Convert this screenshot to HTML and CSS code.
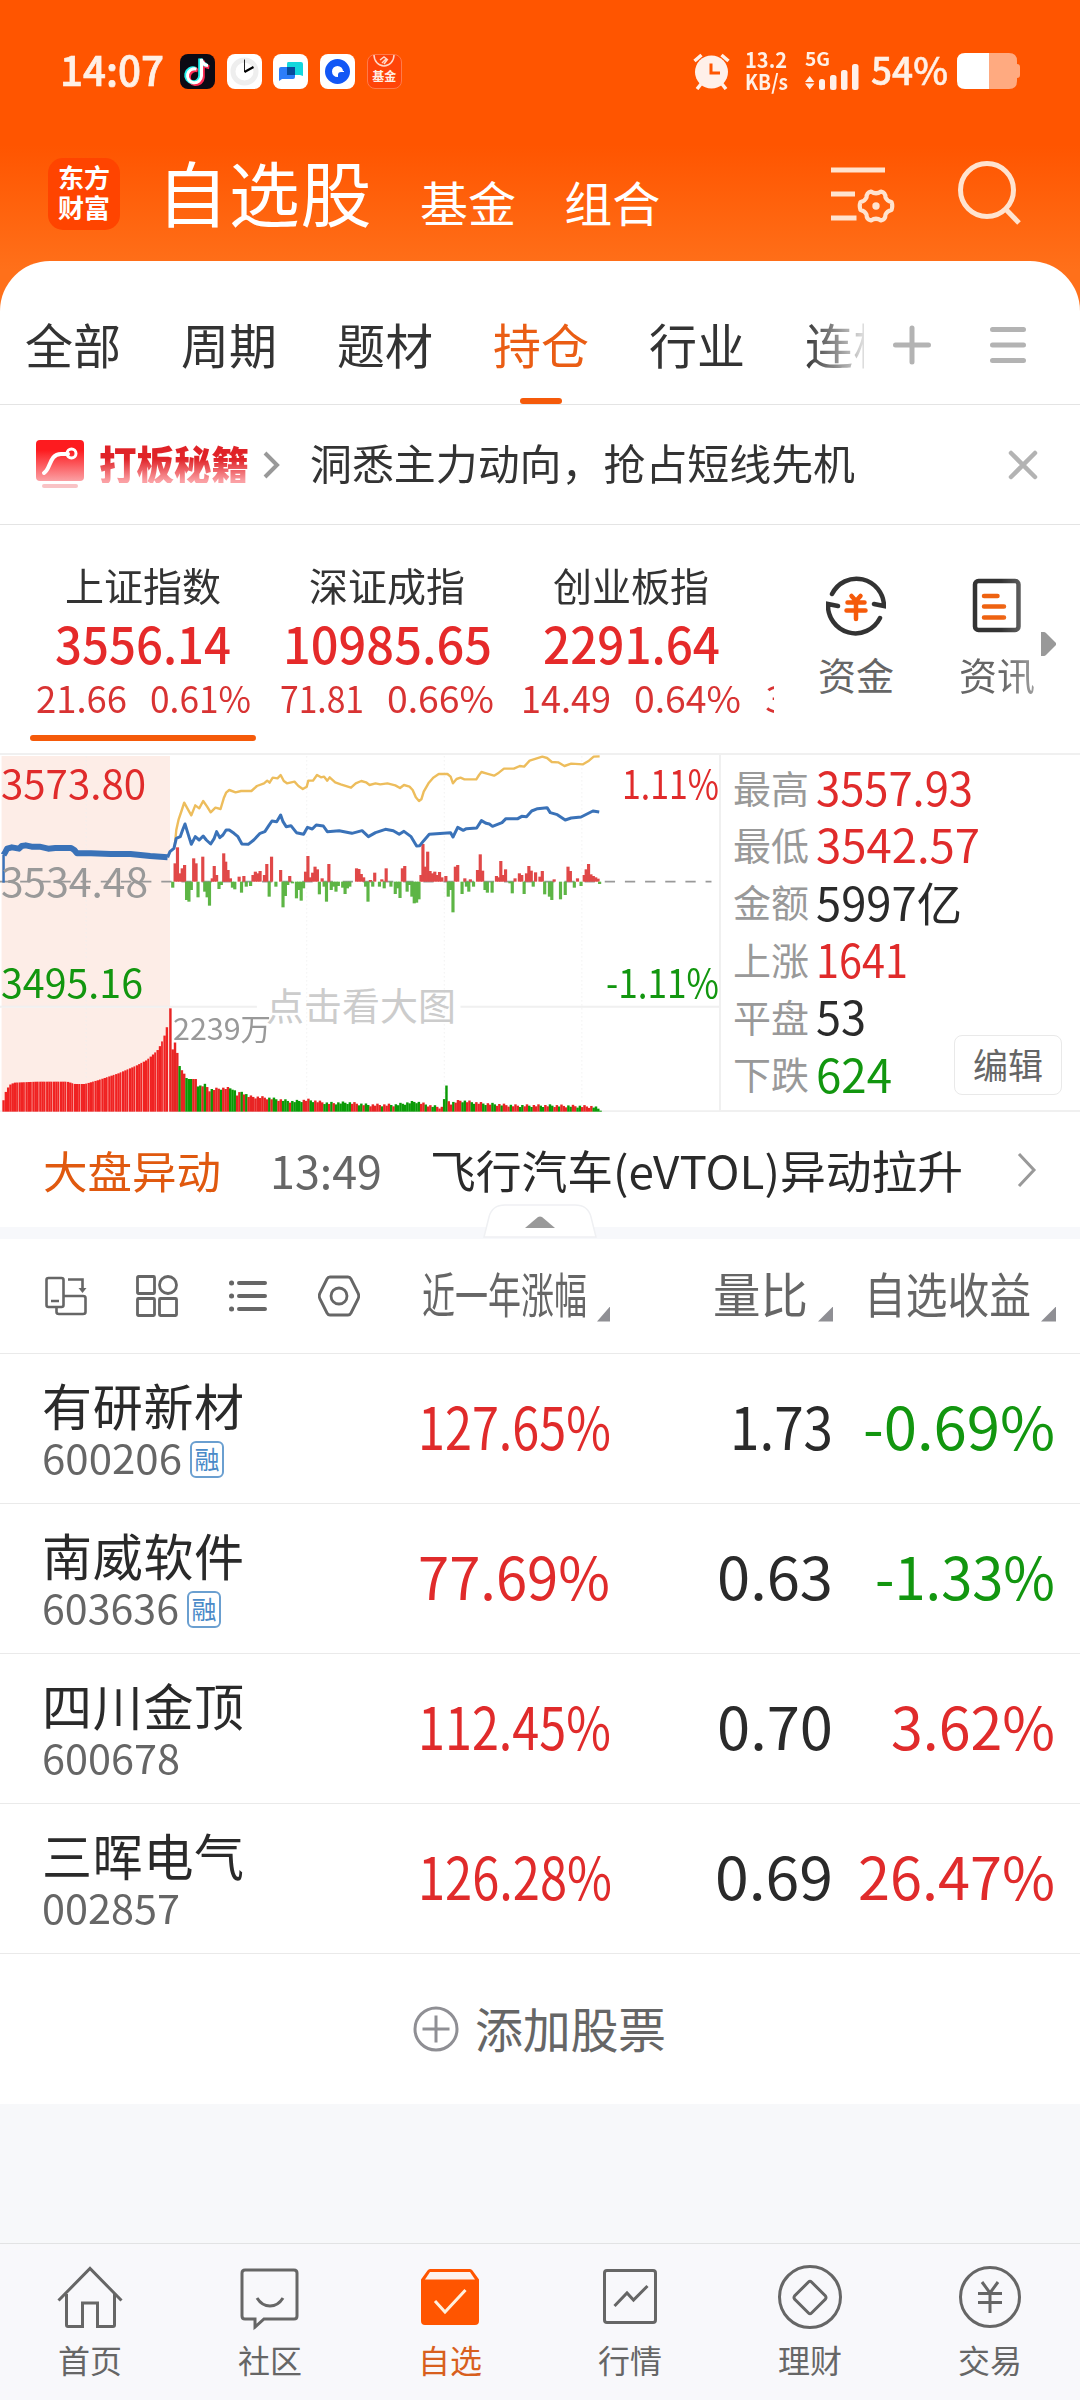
FILE: index.html
```html
<!DOCTYPE html>
<html lang="zh-CN">
<head>
  <meta charset="UTF-8" />
  <meta name="viewport" content="width=device-width, initial-scale=1.0"/>
  <title>自选股</title>
  <link rel="stylesheet" href="styles.css">
</head>
<body>
  <header class="top">
    <div class="status">
      <span class="clock" data-w="104">14:07</span>
      <div class="apps">
        <svg width="35" height="35" viewBox="0 0 35 35"><rect width="35" height="35" rx="8" fill="#0c0a14"/><g fill="none" stroke-width="4"><path d="M17 15.500a7 7 0 1 0 5 7V6c.5 4 3 6 6.500 6.500" stroke="#fe2c55" transform="translate(.8 .8)"/><path d="M16 15a7 7 0 1 0 5 7V5c.5 4 3 6 6.500 6.500" stroke="#25f4ee" transform="translate(-.8 -.4)"/><path d="M16.500 15a7 7 0 1 0 5 7V5c.5 4 3 6 6.500 6.500" stroke="#fff" stroke-width="3"/></g></svg>
        <svg width="35" height="35" viewBox="0 0 35 35"><rect width="35" height="35" rx="8" fill="#fff"/><circle cx="17.500" cy="17.500" r="11.500" fill="none" stroke="#eee" stroke-width="5"/><path d="M17.500 18V5.500" stroke="#222"/><path d="m17.500 18 9-5" stroke="#000" stroke-width="2.200"/></svg>
        <svg width="35" height="35" viewBox="0 0 35 35"><rect width="35" height="35" rx="8" fill="#fff"/><path d="M15 8h13q2 0 2 2v12l-3-1H14V10q0-2 1-2z" fill="#12d7dd"/><path d="M8 13h14v10q0 2-2 2H9l-3 2V15q0-2 2-2z" fill="#2b7dfa"/><path d="M14 13h8v8h-8z" fill="#064a9c"/></svg>
        <svg width="35" height="35" viewBox="0 0 35 35"><rect width="35" height="35" rx="8" fill="#fff"/><circle cx="17.500" cy="17.500" r="9" fill="none" stroke="#1257f5" stroke-width="7"/><path d="M18 17h6v6h-6z" fill="#fff"/><path d="M18 23v-2q0-3 3-3h4v5z" fill="#1257f5"/></svg>
        <div class="fund-app">
          <svg width="22" height="13" viewBox="0 0 22 13"><path d="M1 0a10 11 0 0 0 20 0M7 5l4-3 4 3M9 8l4-4M11 9l3-4" fill="none" stroke="#ffd8c8" stroke-width="1.500"/></svg>
          <span>基金</span>
        </div>
      </div>
      <div class="status-right">
        <svg class="alarm" width="37" height="37" viewBox="0 0 37 37"><circle cx="18.500" cy="19" r="16.500" fill="#fff0e9"/><path d="m1.500 8 7-6M35.500 8l-7-6M8 31l-4 5M29 31l4 5" stroke="#fff0e9" stroke-width="3.500"/><path d="M18 10.500V20h9" fill="none" stroke="#ff5500" stroke-width="3"/></svg>
        <div class="speed"><span data-w="42">13.2</span><span data-w="43">KB/s</span></div>
        <div class="signal">
          <span data-w="25">5G</span>
          <svg width="54" height="26" viewBox="0 0 54 26"><g fill="#fff0e9"><path d="m0 18 4.700-6 4.700 6zM0 19.500l4.700 6 4.700-6z"/><rect x="14" y="15" width="6" height="11" rx="2.500"/><rect x="25" y="11" width="6.500" height="15" rx="2.500"/><rect x="36" y="6" width="6.500" height="20" rx="2.500"/><rect x="47" y="0" width="6.500" height="26" rx="2.500"/></g></svg>
        </div>
        <span class="percent" data-w="77">54%</span>
        <svg class="battery" width="63" height="36" viewBox="0 0 63 36"><path d="M32 0h20q8 0 8 8v3q3 0 3 3v8q0 3-3 3v3q0 8-8 8H32z" fill="#ffaa80"/><path d="M8 0h24v36H8q-8 0-8-8V8q0-8 8-8z" fill="#fff"/></svg>
      </div>
    </div>
    <nav class="main-nav">
      <div class="logo"><span>东方</span><span>财富</span></div>
      <span class="nav-active">自选股</span>
      <span class="nav-link">基金</span>
      <span class="nav-link">组合</span>
      <svg class="filter" width="64" height="60" viewBox="0 0 64 60" fill="none" stroke="#ffe3cf" stroke-width="5"><path d="M0 6h54M0 30h24M0 54h25.500"/><path d="M40 27.500q5 3.500 10 0 4.500 1 4.500 6 1.500 3.500 6 4.500 1.500 4 0 8-4.500 1-6 4.500 0 5-4.500 6-5-3.500-10 0-4.500-1-4.500-6-1.500-3.500-6-4.500-1.500-4 0-8 4.500-1 6-4.500 0-5 4.500-6z" stroke-width="4.200" stroke-linejoin="round"/><circle cx="45" cy="42" r="3.700" fill="#ffe3cf" stroke="none"/></svg>
      <svg class="search" width="64" height="66" viewBox="0 0 64 66" fill="none" stroke="#ffe3cf" stroke-width="5"><circle cx="29" cy="29" r="26.500"/><path d="m47.500 48 13.500 14"/></svg>
    </nav>
  </header>

  <main>
    <div class="groups">
      <div class="group-list">
        <span>全部</span><span>周期</span><span>题材</span><span class="on">持仓</span><span>行业</span><span>连板</span>
      </div>
      <svg width="40" height="40" viewBox="0 0 40 40" stroke="#b3b3b3" stroke-width="5" stroke-linecap="round"><path d="M20 3v34M3.500 20h33"/></svg>
      <svg class="menu" width="40" height="40" viewBox="0 0 40 40" stroke="#b3b3b3" stroke-width="5" stroke-linecap="round"><path d="M4.500 4.500h31M4.500 20h31M4.500 35.500h31"/></svg>
    </div>

    <div class="banner">
      <svg width="48" height="49" viewBox="0 0 48 49"><defs><linearGradient id="red" x2="0" y2="1"><stop offset=".25" stop-color="#fd1b1f"/><stop offset="1" stop-color="#fba0a4"/></linearGradient></defs><rect width="48" height="41" rx="4" fill="url(#red)"/><rect x="6" y="44" width="36" height="4" rx="2" fill="#f9c3c5"/><path d="M8 33C15 29 13 14 25 14h7" fill="none" stroke="#fff" stroke-width="4" stroke-linecap="round"/><circle cx="35.500" cy="13.500" r="4.500" fill="none" stroke="#fff" stroke-width="3"/></svg>
      <b data-w="150">打板秘籍</b>
      <svg class="go" width="17" height="28" viewBox="0 0 17 28" fill="none" stroke="#999" stroke-width="4"><path d="m2 2 12 12L2 26"/></svg>
      <span class="slogan" data-w="545">洞悉主力动向，抢占短线先机</span>
      <svg class="close" width="30" height="30" viewBox="0 0 30 30" stroke="#b3b3b3" stroke-width="4.500" stroke-linecap="round"><path d="m3 3 24 24M27 3 3 27"/></svg>
    </div>

    <div class="indices">
      <div class="index-list">
        <div class="index on"><span data-w="156">上证指数</span><strong data-w="176">3556.14</strong><p><span data-w="91">21.66</span><span data-w="101">0.61%</span></p></div>
        <div class="index"><span data-w="156">深证成指</span><strong data-w="209">10985.65</strong><p><span data-w="84">71.81</span><span data-w="107">0.66%</span></p></div>
        <div class="index"><span data-w="156">创业板指</span><strong data-w="177">2291.64</strong><p><span data-w="90">14.49</span><span data-w="107">0.64%</span></p></div>
        <div class="index cut"><p><span data-w="84">3.42</span></p></div>
      </div>
      <div class="shortcut">
        <svg width="60" height="62" viewBox="0 0 60 62" fill="none" stroke="#333" stroke-width="4.500" stroke-linecap="round"><path d="M6 19a27.500 28 0 0 1 52 12l-10-2M54 43A27.500 28 0 0 1 2 29l10 2"/><path d="m25.500 21 4.500 5 4.500-5M30 26v18M21.500 27.500h17M20.500 35.500h19" stroke="#f55a0a"/></svg>
        <span>资金</span>
      </div>
      <div class="shortcut faded">
        <svg width="60" height="62" viewBox="0 0 60 62" fill="none" stroke="#333" stroke-width="4.500" stroke-linecap="round"><rect x="8" y="6" width="43.500" height="49" rx="3.500"/><path d="M17 21h13.500M17 31.500h20M17 42.500h20" stroke="#ee6210"/></svg>
        <span>资讯</span>
      </div>
      <svg class="more" width="15" height="24" viewBox="0 0 15 24"><path d="M0 0h3q1 0 2 1l10 10v2L5 23q-1 1-2 1H0z" fill="#999"/></svg>
    </div>

    <section class="market">
      <div class="chart">
        <svg id="chart" width="719" height="359" viewBox="0 39 1819 1077" preserveAspectRatio="none"></svg>
        <span class="high red" data-w="145">3573.80</span>
        <span class="mid" data-w="147">3534.48</span>
        <span class="low green" data-w="142">3495.16</span>
        <span class="high right red" data-w="97">1.11%</span>
        <span class="low right green" data-w="113">-1.11%</span>
        <span class="hint">点击看大图</span>
        <span class="volume" data-w="98">2239万</span>
      </div>
      <div class="stats">
        <dl>
          <div><dt>最高</dt><dd class="red" data-w="157">3557.93</dd></div>
          <div><dt>最低</dt><dd class="red" data-w="164">3542.57</dd></div>
          <div><dt>金额</dt><dd data-w="146">5997亿</dd></div>
          <div><dt>上涨</dt><dd class="red" data-w="92">1641</dd></div>
          <div><dt>平盘</dt><dd data-w="50">53</dd></div>
          <div><dt>下跌</dt><dd class="green" data-w="76">624</dd></div>
        </dl>
        <button class="edit">编辑</button>
      </div>
    </section>

    <div class="news">
      <span class="news-tag" data-w="178">大盘异动</span>
      <span class="news-time" data-w="112">13:49</span>
      <span class="news-title" data-w="533">飞行汽车(eVTOL)异动拉升</span>
      <svg width="20" height="34" viewBox="0 0 20 34" fill="none" stroke="#999" stroke-width="3"><path d="m2 1 15 16L2 33"/></svg>
      <svg class="handle" width="114" height="34" viewBox="0 0 114 34"><path d="M1 33 6 13Q9 1 22 1h70q13 0 16 12l5 20z" fill="#fff" stroke="#eff0f3" stroke-width="1.500"/><path d="m42 24 13-11q2-1 4 0l13 11z" fill="#999"/></svg>
    </div>

    <div class="columns">
      <div class="tools">
        <svg width="42" height="42" viewBox="0 0 42 42" fill="none" stroke="#666" stroke-width="2.600"><rect x="1.500" y="3" width="17" height="29" rx="2"/><path d="M6 26h8M19 21h19q2.500 0 2.500 2v14q0 2-2.500 2H14q-2.500 0-2.500-2v-5M23 4.500h14.500V14"/><path d="M33.500 13h8l-4 5z" fill="#666" stroke="none"/></svg>
        <svg width="42" height="42" viewBox="0 0 42 42" fill="none" stroke="#666" stroke-width="2.800"><rect x="1.500" y="1.500" width="17" height="17" rx="1"/><circle cx="32" cy="10" r="8.500"/><rect x="1.500" y="23.500" width="17" height="17" rx="1"/><rect x="23.500" y="23.500" width="17" height="17" rx="1"/></svg>
        <svg width="42" height="42" viewBox="0 0 42 42" stroke="#666" stroke-width="4" stroke-linecap="round"><path d="M12 8h26M12 21h26M12 34h26"/><path d="M4.500 8h.1M4.500 21h.1M4.500 34h.1" stroke-width="5"/></svg>
        <svg width="42" height="42" viewBox="0 0 42 42" fill="none" stroke="#666" stroke-width="2.800"><path d="M12 2h18q2 0 3 2l7 14q1.500 3 0 6l-7 14q-1 2-3 2H12q-2 0-3-2L2 24q-1.500-3 0-6L9 4q1-2 3-2z"/><circle cx="21" cy="21" r="8"/></svg>
      </div>
      <div class="col col-year"><span data-w="165">近一年涨幅</span><i></i></div>
      <div class="col col-ratio"><span data-w="95">量比</span><i></i></div>
      <div class="col col-gain"><span data-w="167">自选收益</span><i></i></div>
    </div>

    <div class="stock">
      <div class="name"><h3>有研新材</h3><p><span data-w="140">600206</span><em>融</em></p></div>
      <span class="year red" data-w="193">127.65%</span><span class="ratio" data-w="103">1.73</span><span class="gain green" data-w="192">-0.69%</span>
    </div>
    <div class="stock">
      <div class="name"><h3>南威软件</h3><p><span data-w="137">603636</span><em>融</em></p></div>
      <span class="year red" data-w="192">77.69%</span><span class="ratio" data-w="116">0.63</span><span class="gain green" data-w="180">-1.33%</span>
    </div>
    <div class="stock">
      <div class="name"><h3>四川金顶</h3><p><span data-w="138">600678</span></p></div>
      <span class="year red" data-w="193">112.45%</span><span class="ratio" data-w="116">0.70</span><span class="gain red" data-w="164">3.62%</span>
    </div>
    <div class="stock">
      <div class="name"><h3>三晖电气</h3><p><span data-w="138">002857</span></p></div>
      <span class="year red" data-w="194">126.28%</span><span class="ratio" data-w="118">0.69</span><span class="gain red" data-w="197">26.47%</span>
    </div>

    <div class="add">
      <svg width="46" height="46" viewBox="0 0 46 46" fill="none" stroke="#8f8f94" stroke-width="3"><circle cx="23" cy="23" r="21"/><path d="M23 9.500v27M9.500 23h27"/></svg>
      <span>添加股票</span>
    </div>
  </main>

  <footer class="tabbar">
    <div class="tab"><svg width="66" height="66" viewBox="0 0 66 66"><path d="m1.500 35.500 31.500-32 31.500 32M9.500 29v31q0 1.500 1.500 1.500h14.500V38h15v23.500H56q1.500 0 1.500-1.500V29"/></svg><span>首页</span></div>
    <div class="tab"><svg width="66" height="66" viewBox="0 0 66 66"><path d="M8 5h49q3 0 3 3v43q0 3-3 3H27l-9 8v-8H8q-3 0-3-3V8q0-3 3-3zM20 33q5 8 13 8t13-8"/></svg><span>社区</span></div>
    <div class="tab on"><svg width="66" height="66" viewBox="0 0 66 66"><path d="M13 4h40q1.500 0 2.500 1.500l6.500 9V56q0 4-4 4H8q-4 0-4-4V14.500l6.500-9Q11.500 4 13 4z" fill="#ff5500" stroke="none"/><path d="m13 7-5 7.500h50L53 7z" fill="#fdf3ee" stroke="none"/><path d="m18 36 10 11 20.500-22" stroke="#fff0dd"/></svg><span>自选</span></div>
    <div class="tab"><svg width="66" height="66" viewBox="0 0 66 66"><rect x="7.500" y="5.500" width="51" height="52" rx="2.500"/><path d="M17.500 41 30 28l6.500 7 14-14"/></svg><span>行情</span></div>
    <div class="tab"><svg width="66" height="66" viewBox="0 0 66 66"><circle cx="33" cy="32" r="30.500"/><path d="M31.500 17q1.500-1.500 3 0l14 14q1 1.500 0 3l-14 14q-1.500 1.500-3 0l-14-14q-1-1.500 0-3z"/></svg><span>理财</span></div>
    <div class="tab"><svg width="66" height="66" viewBox="0 0 66 66"><circle cx="33" cy="32" r="29.500"/><path d="m25 17 8 11 8-11M33 28v20M21 28.500h24M21 37.500h24"/></svg><span>交易</span></div>
  </footer>

  <script src="script.js"></script>
</body>
</html>
```
FILE: styles.css
```css
* {
  box-sizing: border-box;
}

body {
  margin: 0;
  width: 1080px;
  height: 2400px;
  display: flex;
  flex-direction: column;
  overflow: hidden;
  background: #f7f8fa;
  color: #2a2a2a;
  font-family: "Noto Sans CJK SC", sans-serif;
  font-weight: 400;
  line-height: 1;
}

span, strong, b, dt, dd {
  white-space: nowrap;
}

svg {
  display: block;
  flex: none;
}

h3, p, dl, dd {
  margin: 0;
}

.red {
  color: #e02b2b;
}

.green {
  color: #12960f;
}

/* status bar + main navigation */
.top {
  height: 320px;
  flex: none;
  background: linear-gradient(#ff5500 145px, #ff701a 270px);
  color: #fff;
}

.status {
  height: 142px;
  display: flex;
  align-items: center;
  padding: 0 60px 0 60px;
  color: #fff0e6;
}

.clock {
  font-size: 41px;
  font-weight: 500;
  margin-top: -5px;
  -webkit-text-stroke: .7px #fff0e6;
}

.apps {
  display: flex;
  gap: 11.7px;
  margin-left: 16px;
}

.fund-app {
  width: 35px;
  height: 35px;
  border: 1px solid #ff7a4a;
  border-radius: 8px;
  background: #ff4408;
  display: flex;
  flex-direction: column;
  align-items: center;
}

.fund-app span {
  font-size: 12px;
  font-weight: 700;
  line-height: 16px;
}

.status-right {
  display: flex;
  align-items: center;
  margin-left: auto;
}

.speed {
  display: flex;
  flex-direction: column;
  align-items: flex-start;
  width: 43px;
  margin: -3px 0 0 15px;
  font-size: 21px;
  line-height: 22px;
  font-weight: 700;
}

.signal {
  display: flex;
  flex-direction: column;
  align-items: flex-start;
  margin: -2px 0 0 17px;
  font-size: 18px;
  font-weight: 700;
}

.signal span {
  height: 14px;
  line-height: 16px;
}

.percent {
  font-size: 38px;
  font-weight: 500;
  margin: -4px 0 0 12px;
  -webkit-text-stroke: .5px #fff0e6;
}

.battery {
  margin-left: 9px;
}

.main-nav {
  display: flex;
  height: 100px;
  align-items: center;
  padding: 4px 54px 0 48px;
}

.logo {
  width: 72px;
  height: 72px;
  border-radius: 15px;
  background: #ff4400;
  display: flex;
  flex-direction: column;
  align-items: center;
  justify-content: center;
  font-size: 26px;
  font-weight: 700;
  line-height: 30px;
  padding-bottom: 5px;
}

.nav-active {
  font-size: 71px;
  letter-spacing: .7px;
  margin: -7px 0 0 37px;
}

.nav-link {
  font-size: 48px;
  margin: 14px 0 0 48px;
}

.nav-active + .nav-link {
  margin-left: 48px;
}

.filter {
  margin-left: auto;
}

.search {
  margin-left: 63px;
  margin-right: 4px;
}

/* group tabs */
main {
  margin-top: -59px;
  background: #fff;
  border-radius: 50px 50px 0 0;
}

.groups {
  height: 144px;
  display: flex;
  align-items: center;
  padding: 24px 48px 0 0;
  border-bottom: 1px solid #e4e4e4;
}

.groups > svg {
  margin-left: 28px;
}

.groups > .menu {
  margin-left: 56px;
}

.group-list {
  width: 864px;
  display: flex;
  gap: 60px;
  padding-left: 25px;
  overflow: hidden;
  font-size: 48px;
  line-height: 117px;
  height: 119px;
  color: #333;
  -webkit-mask: linear-gradient(90deg, #000 805px, transparent 875px);
  mask: linear-gradient(90deg, #000 805px, transparent 875px);
}

.group-list span {
  height: 119px;
}

.group-list .on {
  color: #ea5d14;
  display: flex;
  flex-direction: column;
  align-items: center;
}

.group-list .on::after {
  content: "";
  width: 42px;
  height: 6px;
  flex: none;
  margin-top: -4px;
  border-radius: 3px;
  background: #f55a0a;
}

/* promotion */
.banner {
  height: 120px;
  display: flex;
  align-items: center;
  padding: 0 42px 0 36px;
  border-bottom: 1px solid #e4e4e4;
}

.banner b {
  font-size: 40px;
  font-weight: 900;
  margin: -4px 0 0 15px;
  background: linear-gradient(#e02328 40%, #fba0a4 95%);
  -webkit-background-clip: text;
  background-clip: text;
  color: transparent;
}

.go {
  margin-left: 14px;
}

.slogan {
  font-size: 42px;
  color: #333;
  margin: -5px 0 0 30px;
}

.close {
  margin-left: auto;
}

/* index list */
.indices {
  height: 228px;
  display: flex;
}

.index-list {
  width: 774px;
  height: 228px;
  padding-left: 21px;
  display: flex;
  overflow: hidden;
}

.index {
  width: 244px;
  flex: none;
  display: flex;
  flex-direction: column;
  align-items: center;
  padding-top: 40px;
  font-size: 39px;
  color: #333;
}

.index strong {
  font-size: 50px;
  font-weight: 500;
  color: #e52a2a;
  margin-top: 13px;
}

.index p {
  display: flex;
  gap: 23px;
  font-size: 37px;
  color: #d83333;
  margin-top: 12px;
}

.index.on::after {
  content: "";
  width: 226px;
  height: 6px;
  margin-top: 19px;
  border-radius: 3px;
  background: #f55a0a;
}

.index.cut {
  padding: 154px 0 0 12px;
  align-items: flex-start;
}

.index.cut p {
  margin-top: 0;
}

.shortcut {
  width: 82px;
  margin-left: 41px;
  padding-top: 50px;
  display: flex;
  flex-direction: column;
  align-items: center;
  gap: 18px;
  font-size: 38px;
  color: #666;
}

.shortcut.faded {
  margin-left: 59px;
  -webkit-mask: linear-gradient(90deg, #000 45px, rgba(0,0,0,.6));
  mask: linear-gradient(90deg, #000 45px, rgba(0,0,0,.6));
}

.more {
  margin: 107px 0 0 3px;
}

/* intraday chart */
.market {
  height: 359px;
  display: flex;
}

.chart {
  width: 719px;
  position: relative;
  font-size: 40px;
}

/* labels lie over the plot */
.chart span {
  position: absolute;
  left: 1px;
}

.chart .high { top: 9px; }
.chart .mid { top: 107px; color: #999; }
.chart .low { top: 208px; }

.chart span.right {
  left: auto;
  right: 0;
}

.chart .hint {
  left: 257px;
  top: 232px;
  padding: 0 6px 0 9px;
  font-size: 38px;
  color: #ccc;
}

.chart .volume {
  left: 173px;
  top: 259px;
  font-size: 30px;
  color: #999;
}

.stats {
  flex: 1;
  position: relative;
  border: solid #f0f0f0;
  border-width: 2px 0 2px 2px;
  padding: 6px 0 0 12px;
}

.stats div {
  display: flex;
  height: 57.3px;
  align-items: center;
}

.stats dt {
  width: 83px;
  font-size: 38px;
  color: #999;
  margin-top: -6px;
}

.stats dd {
  font-size: 46px;
  margin-top: -7px;
}

.edit {
  position: absolute;
  right: 18px;
  bottom: 15px;
  width: 108px;
  height: 60px;
  border: 1px solid #e9e9e9;
  border-radius: 8px;
  background: #fff;
  color: #666;
  font: 35px/1 "Noto Sans CJK SC", sans-serif;
  padding: 0 0 4px;
}

/* market news */
.news {
  height: 127px;
  border-bottom: 12px solid #f7f8fb;
  display: flex;
  align-items: center;
  padding: 0 43px 0 43px;
  font-size: 45px;
  position: relative;
}

.news > .news-tag {
  color: #e0590f;
  font-size: 44px;
}

.news > .news-time {
  color: #666;
  margin-left: 49px;
}

.news > .news-title {
  margin-left: 48px;
}

.news > svg {
  margin-left: auto;
}

.news > .handle {
  position: absolute;
  left: 483px;
  bottom: -11px;
}

/* list header */
.columns {
  height: 115px;
  display: flex;
  align-items: center;
  border-bottom: 1px solid #eaeaea;
  color: #666;
  font-size: 48px;
}

.tools {
  display: flex;
  gap: 49px;
  padding-left: 45px;
  width: 422px;
}

.col {
  display: flex;
  align-items: center;
  justify-content: flex-end;
  gap: 10px;
}

.col span {
  margin-top: -8px;
}

.col i {
  width: 15px;
  height: 15px;
  margin-top: 36px;
  background: #8f8f94;
  clip-path: polygon(100% 0, 100% 100%, 0 100%);
}

.col-year { width: 188px; }
.col-ratio { width: 223px; }
.col-gain { width: 223px; }

/* stocks */
.stock {
  height: 150px;
  display: grid;
  grid-template-columns: 418px 195px 220px 222px;
  align-items: center;
  border-bottom: 1px solid #eaeaea;
  font-size: 58px;
}

.stock > span {
  margin-top: -7px;
}

.name {
  padding-left: 42px;
}

.name h3 {
  font-size: 50px;
  font-weight: 400;
  letter-spacing: .7px;
}

.name p {
  display: flex;
  align-items: center;
  gap: 8px;
  height: 38px;
  margin-top: 12px;
  font-size: 40px;
  color: #666;
}

.name p span {
  margin-top: -6px;
}

.name em {
  width: 34px;
  height: 37px;
  margin-top: -1px;
  border: 2px solid #6a9fd0;
  border-radius: 6px;
  color: #4a8ac8;
  font-size: 25px;
  font-style: normal;
  line-height: 30px;
  text-align: center;
}

.year {
  justify-self: start;
}

.ratio, .gain {
  justify-self: end;
}

.add {
  height: 150px;
  display: flex;
  align-items: center;
  gap: 16px;
  padding-left: 413px;
  font-size: 48px;
  color: #666;
}

.add span {
  letter-spacing: -.3px;
  margin-top: -5px;
}

/* bottom tabs */
.tabbar {
  height: 157px;
  flex: none;
  margin-top: auto;
  border-top: 1px solid #e2e3e4;
  background: #f8f8fb;
  display: flex;
  color: #666;
}

.tab {
  width: 180px;
  display: flex;
  flex-direction: column;
  align-items: center;
  padding-top: 21px;
  font-size: 32px;
}

.tab svg {
  fill: none;
  stroke: #666;
  stroke-width: 3;
}

.tab span {
  margin-top: 12px;
}

.tab.on {
  color: #d85f1e;
}
```
FILE: script.js
```js
document.querySelectorAll('[data-w]').forEach(el => {
  const w = Number(el.dataset.w);
  el.style.display = 'inline-block';
  el.style.width = 'max-content';
  el.style.flex = 'none';
  const natural = el.getBoundingClientRect().width;
  el.style.marginRight = w - natural + 'px';
  el.style.transformOrigin = '0 0';
  el.style.transform = `scaleX(${w / natural})`;
});

const chart = document.getElementById('chart');

const average = '442,318 446,270 452,238 460,210 466,188 474,205 484,226 494,196 504,205 514,183 524,200 533,217 545,203 558,207 566,175 572,158 580,150 596,157 610,153 636,153 650,138 668,130 676,122 682,128 690,113 702,115 710,105 718,123 726,130 745,125 755,138 766,147 776,140 780,122 792,122 802,105 812,112 820,110 828,122 834,112 848,127 862,133 888,143 900,130 914,123 926,127 935,135 950,130 962,133 980,130 1000,136 1012,144 1022,135 1036,140 1044,150 1052,172 1060,183 1066,178 1072,155 1084,130 1096,113 1110,102 1132,102 1140,110 1146,130 1155,117 1165,113 1175,118 1205,118 1212,105 1218,96 1232,101 1250,107 1262,98 1275,86 1300,86 1315,78 1326,80 1340,62 1372,50 1384,54 1396,66 1412,67 1428,78 1445,71 1475,73 1490,62 1502,50 1517,49';
const auction = '9,345 14,335 18,326 30,322 48,326 55,318 65,316 80,320 100,320 122,326 140,324 180,324 188,330 195,340 230,340 280,342 330,342 380,348 424,352';
const price = '424,352 430,335 440,325 446,295 456,290 462,270 468,252 474,275 484,313 494,290 504,300 514,288 522,300 533,312 542,295 548,275 556,293 564,285 572,270 580,270 592,280 602,290 612,312 628,313 642,300 658,280 670,275 680,257 688,243 700,245 710,225 716,245 724,260 736,257 750,278 768,283 778,262 790,267 800,255 818,258 828,275 858,272 890,280 916,272 932,290 950,278 975,268 995,272 1010,283 1022,274 1040,290 1054,318 1062,317 1072,302 1086,283 1140,278 1146,291 1158,262 1172,271 1180,266 1206,264 1218,242 1230,250 1238,252 1246,259 1270,248 1280,236 1310,236 1320,229 1332,230 1345,213 1360,206 1384,203 1392,218 1410,224 1430,240 1445,234 1470,231 1500,213 1516,216';

// x: end of the bar, above or below the middle line at 425
const power = '437:443 443:370 449:322 455:400 461:385 467:375 472:480 478:485 484:450 490:355 496:370 501:472 513:350 518:455 524:472 530:497 537:415 542:378 548:405 554:447 560:435 566:340 571:365 577:390 583:415 588:443 594:448 605:410 611:458 617:408 623:440 634:438 640:405 646:395 652:400 658:393 669:405 675:372 681:470 687:350 698:440 710:390 716:502 722:468 728:435 733:408 740:430 750:475 756:450 762:482 768:445 773:395 779:348 785:412 791:398 797:380 803:388 808:463 815:415 820:440 826:485 832:372 838:450 844:440 850:455 856:438 867:443 873:462 879:445 885:440 902:385 908:387 914:402 920:412 925:440 931:485 937:420 943:440 948:398 960:440 966:418 972:445 977:385 989:440 1000:462 1006:445 1012:474 1018:385 1024:378 1030:455 1036:435 1042:470 1048:490 1054:488 1060:478 1065:405 1070:312 1076:380 1082:335 1088:393 1094:400 1100:395 1106:405 1112:396 1118:412 1128:408 1134:470 1140:450 1146:517 1152:380 1158:375 1169:462 1176:415 1180:440 1186:455 1190:418 1198:440 1208:390 1215:343 1221:392 1227:450 1233:458 1245:458 1256:408 1262:412 1267:363 1273:405 1279:388 1290:430 1296:460 1303:415 1314:400 1320:405 1326:462 1332:400 1338:378 1344:392 1349:440 1355:397 1366:410 1372:393 1378:463 1390:470 1396:480 1402:418 1418:478 1430:465 1437:380 1443:393 1453:443 1461:415 1470:438 1478:405 1483:388 1489:372 1495:403 1501:408 1507:412 1513:416 1517:432';

const volume = [[8,1085],[15,1055],[24,1035],[36,1028],[95,1025],[170,1025],[190,1032],[215,1032],[250,1020],[300,1000],[345,977],[372,960],[398,932],[408,912],[420,876],[431,805],[437,932],[443,906],[449,942],[455,983],[461,992],[467,1003],[473,1017],[495,1017],[501,1040],[520,1035],[530,1050],[560,1045],[590,1045],[600,1065],[612,1055],[630,1070],[670,1073],[700,1078],[740,1085],[780,1080],[830,1090],[880,1088],[930,1095],[1000,1095],[1052,1085],[1090,1098],[1121,1103],[1128,1028],[1134,1082],[1140,1090],[1165,1082],[1215,1090],[1300,1097],[1400,1097],[1500,1100],[1518,1108]];
const falling = [[453,457],[470,486],[500,506],[516,522],[534,537],[556,561],[580,592],[608,613],[622,626],[680,684],[692,697],[714,730],[738,762],[786,790],[820,826],[836,840],[850,888],[905,914],[926,932],[966,970],[986,990],[1000,1058],[1075,1080],[1092,1100],[1120,1131],[1146,1150],[1170,1178],[1192,1202],[1224,1230],[1244,1250],[1266,1272],[1290,1296],[1312,1320],[1338,1344],[1366,1374],[1390,1396],[1412,1418],[1436,1444],[1460,1465],[1500,1506],[1515,1520]];

function volumeTop(x) {
  for (let i = 1; i < volume.length; i++) {
    const [x0, y0] = volume[i - 1];
    const [x1, y1] = volume[i];
    if (x <= x1) return y0 + (y1 - y0) * Math.max(0, x - x0) / (x1 - x0);
  }
  return 1108;
}

let svg = '<rect x="4" y="48" width="426" height="750" fill="#fdede7"/><rect x="4" y="803" width="426" height="313" fill="#fdede7"/>';
svg += '<path d="M0 42H1821M0 800H650M1165 800H1821M0 1114H1821" stroke="#f0f0f0" stroke-width="6"/><path d="M218 48V1112M776 48V1112M1124 48V1112M1472 48V1112" stroke="#eee" stroke-width="2" stroke-dasharray="5 7"/>';
svg += '<path d="M0 425H1800" stroke="#999" stroke-width="5" stroke-dasharray="26 25"/>';

power.split(' ').forEach(item => {
  const [x, y] = item.split(':').map(Number);
  const up = y < 425;
  svg += `<rect x="${x - 4}" y="${up ? y : 425}" width="8" height="${Math.abs(y - 425)}" fill="${up ? '#e04848' : '#5db545'}"/>`;
});

for (let i = 0; i < 72; i++) {
  const x = 9 + i * 5.82;
  const y = volumeTop(x);
  svg += `<rect x="${x - 3}" y="${y}" width="${i > 4 && i % 3 === 0 ? 4.5 : 6}" height="${1115 - y}" fill="#f02222"/>`;
}
for (let i = 0; i < 188; i++) {
  const x = 431 + i * 5.82;
  const y = volumeTop(x) + (i > 12 ? (i * 7 % 5 - 2) * 2 : 0);
  const down = falling.some(([a, b]) => x >= a - 2 && x <= b + 2);
  svg += `<rect x="${x - 3}" y="${y}" width="6.2" height="${1115 - y}" fill="${down ? '#0a9a06' : '#e82424'}"/>`;
}

const line = (points, color, width) =>
  `<polyline points="${points}" fill="none" stroke="${color}" stroke-width="${width}" stroke-linejoin="round" vector-effect="non-scaling-stroke"/>`;
svg += line(average, '#edbd5c', 2.4);
svg += line('9,428 9,345', '#3a72b8', 2.5);
svg += line(auction, '#3a72b8', 6);
svg += line(price, '#3a72b8', 3);

chart.innerHTML = svg;
```
